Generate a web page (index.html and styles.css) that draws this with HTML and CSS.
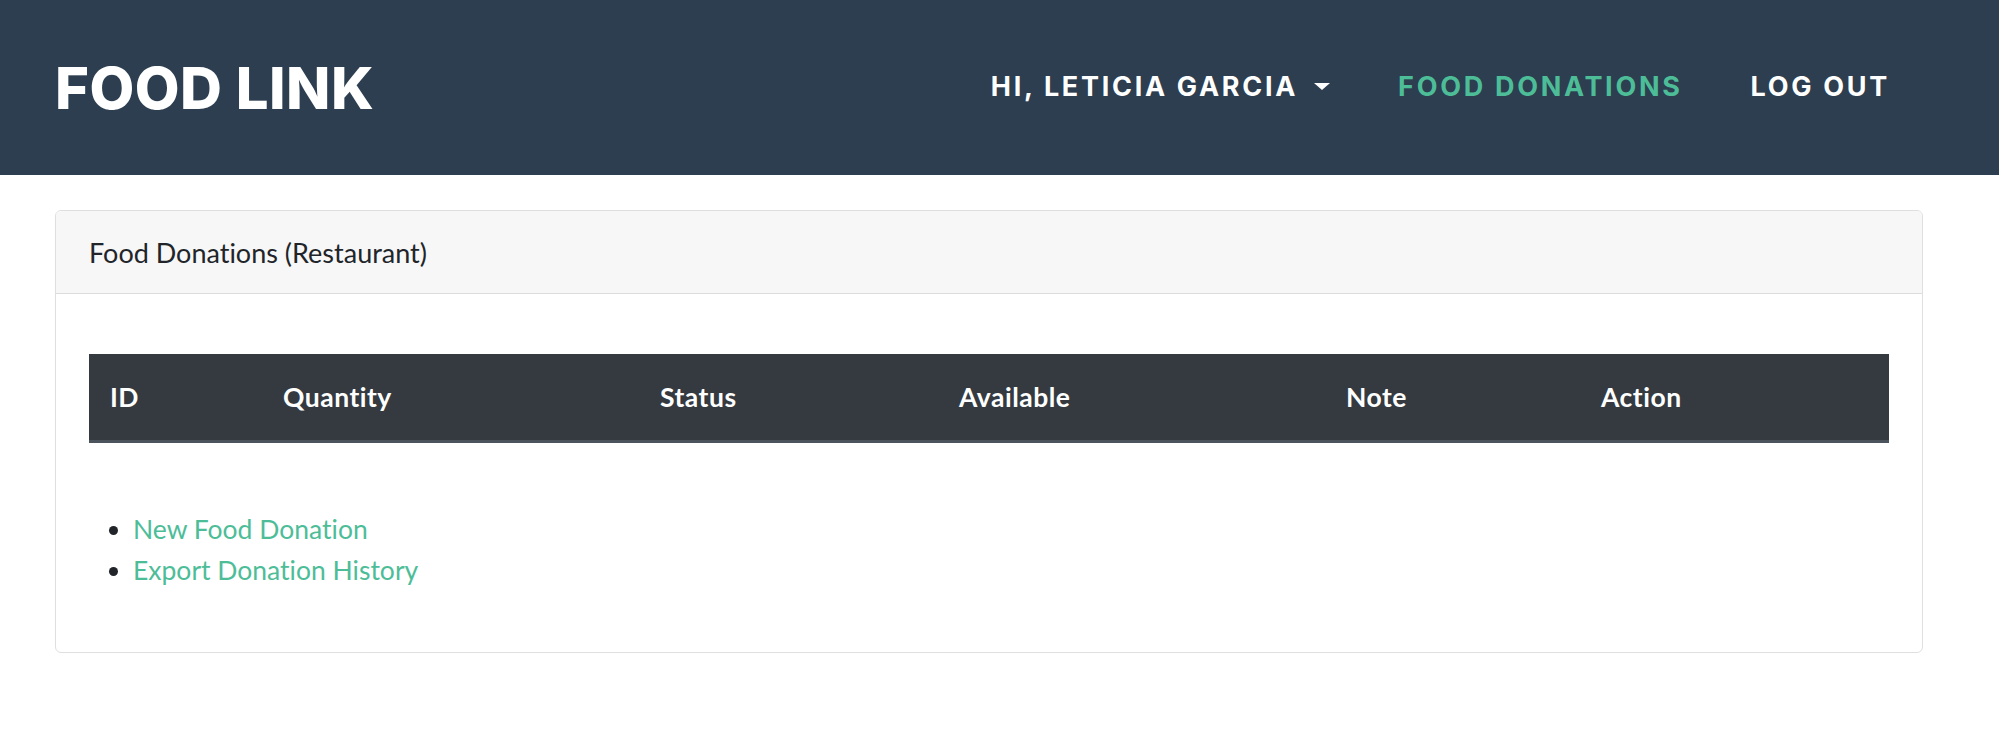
FILE: index.html
```html
<!DOCTYPE html>
<html lang="en">
<head>
<meta charset="utf-8">
<title>Food Link</title>
<link rel="stylesheet" href="styles.css">
</head>
<body>
<header class="navbar">
  <div class="nav-inner">
    <a class="brand" href="#">FOOD LINK</a>
    <nav class="nav-links">
      <a class="nav-link dropdown" href="#">HI, LETICIA GARCIA<span class="caret"></span></a>
      <a class="nav-link active" href="#">FOOD DONATIONS</a>
      <a class="nav-link" href="#">LOG OUT</a>
    </nav>
  </div>
</header>
<main class="main">
  <section class="card">
    <div class="card-header">Food Donations (Restaurant)</div>
    <div class="card-body">
      <table class="table">
        <thead>
          <tr>
            <th class="c-id">ID</th>
            <th class="c-qty">Quantity</th>
            <th class="c-status">Status</th>
            <th class="c-avail">Available</th>
            <th class="c-note">Note</th>
            <th class="c-action">Action</th>
          </tr>
        </thead>
        <tbody></tbody>
      </table>
      <ul class="links">
        <li><a href="#">New Food Donation</a></li>
        <li><a href="#">Export Donation History</a></li>
      </ul>
    </div>
  </section>
</main>
</body>
</html>
```
FILE: styles.css
```css
* { box-sizing: border-box; }
html, body { margin: 0; padding: 0; }
body {
  font-family: Lato, "Open Sans", sans-serif;
  font-size: 26.5px;
  font-variant-ligatures: none;
  color: #212529;
  background: #fff;
}
a { text-decoration: none; }

.navbar {
  background: #2c3e50;
  height: 175px;
}
.nav-inner {
  height: 100%;
  margin: 0 76px 0 55px;
  display: flex;
  align-items: center;
  justify-content: space-between;
}
.brand {
  font-family: Inter, "DejaVu Sans", sans-serif;
  font-weight: 800;
  font-size: 58px;
  color: #fff;
  letter-spacing: 0.5px;
}
.nav-links {
  display: flex;
  align-items: center;
  gap: 68px;
  margin-right: 33px;
  padding-bottom: 2px;
}
.nav-link {
  font-family: Inter, "DejaVu Sans", sans-serif;
  font-weight: 700;
  font-size: 27px;
  letter-spacing: 2.7px;
  color: #fff;
  display: flex;
  align-items: center;
}
.nav-link.active { color: #4dbd98; }
.caret {
  display: inline-block;
  width: 0;
  height: 0;
  margin-left: 16px;
  border-left: 8px solid transparent;
  border-right: 8px solid transparent;
  border-top: 7px solid #fff;
}

.main { padding: 35px 76px 0 55px; }
.card {
  border: 1px solid #dfdfdf;
  border-radius: 6px;
  overflow: hidden;
}
.card-header {
  height: 83px;
  background: #f7f7f7;
  border-bottom: 1px solid #dcdcdc;
  padding-left: 33px;
  display: flex;
  align-items: center;
  font-size: 27px;
  color: #212529;
}
.card-body {
  padding: 60px 33px 33px 33px;
}
.table {
  width: 100%;
  border-collapse: collapse;
  table-layout: fixed;
}
.table th {
  background: #343a40;
  color: #fff;
  font-weight: 700;
  text-align: left;
  height: 87px;
  padding: 0 21px;
  border-bottom: 3px solid #4b545c;
  letter-spacing: 0.5px;
}
.c-id { width: 173px; }
.c-qty { width: 377px; }
.c-status { width: 299px; }
.c-avail { width: 387px; }
.c-note { width: 255px; }

.links {
  margin: 66px 0 28px 0;
  padding-left: 44px;
  line-height: 41px;
}
.links a { color: #4dbd98; }
```
